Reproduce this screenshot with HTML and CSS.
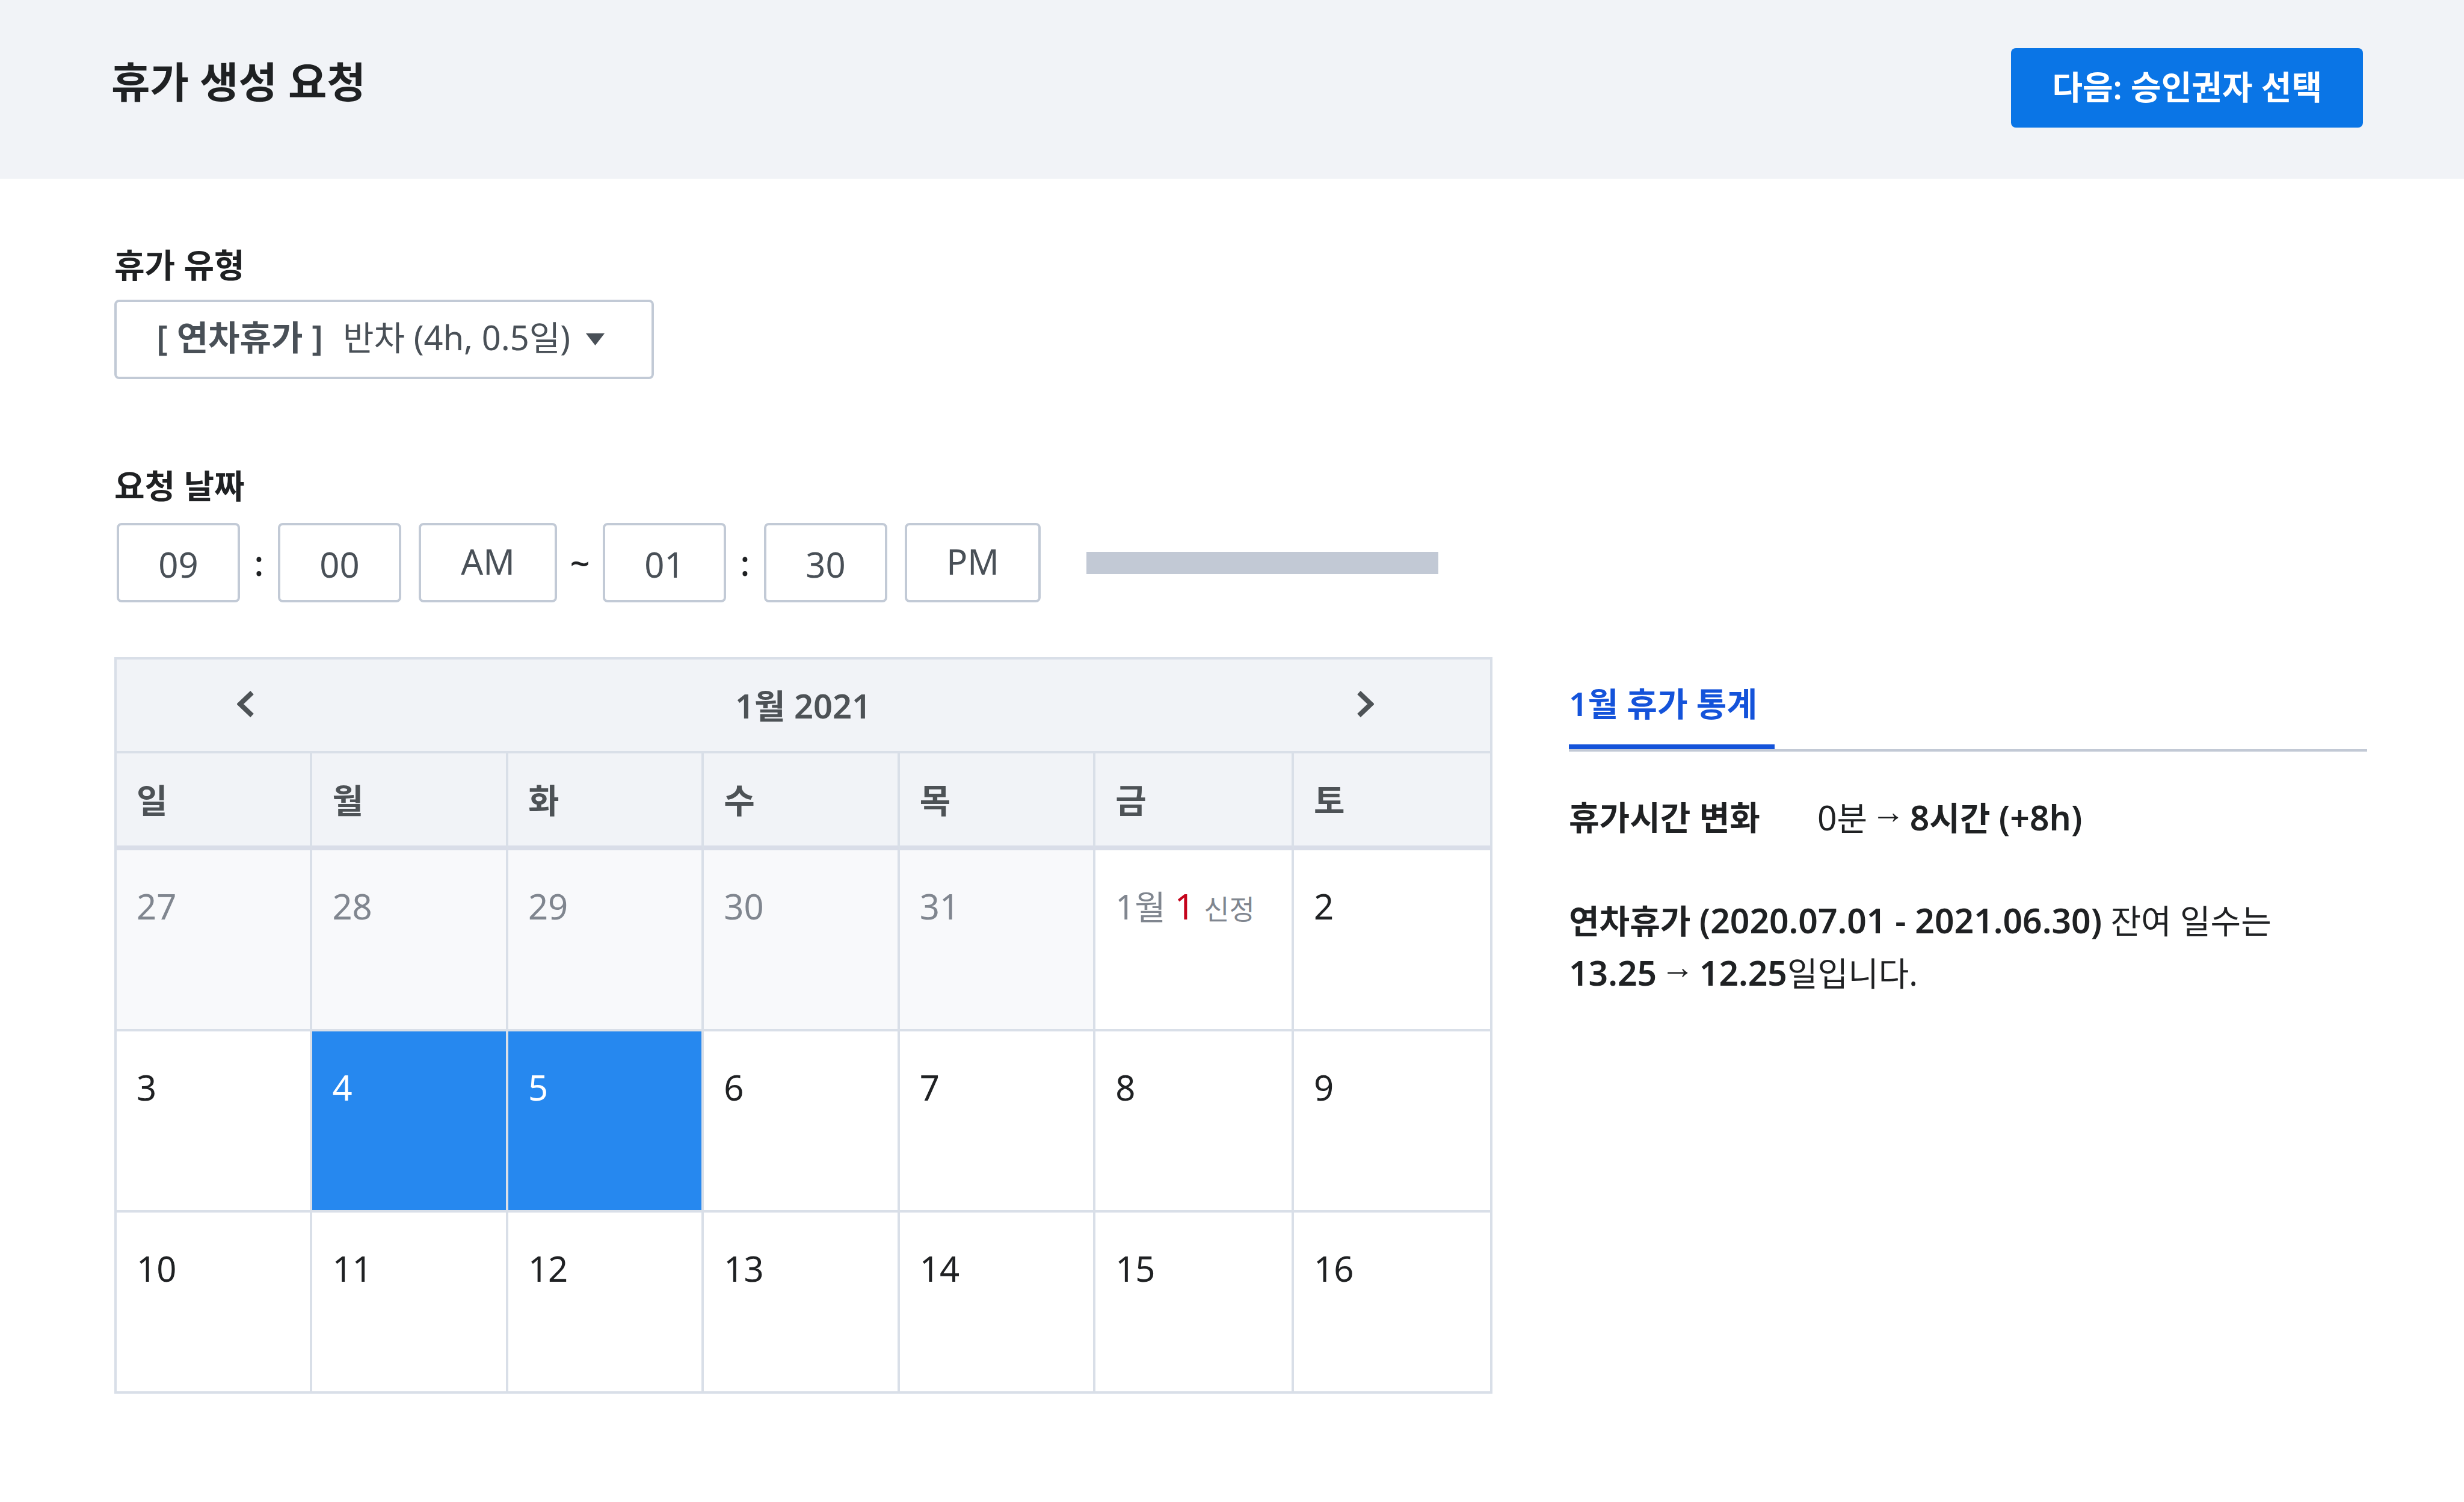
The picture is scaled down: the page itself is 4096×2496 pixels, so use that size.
FILE: index.html
```html
<!DOCTYPE html>
<html lang="ko">
<head>
<meta charset="utf-8">
<title>휴가 생성 요청</title>
<link rel="stylesheet" href="styles.css">
</head>
<body>
<header class="page-header">
  <h1 class="page-title">휴가 생성 요청</h1>
  <button class="next-button" type="button">다음: 승인권자 선택</button>
</header>
<main class="content">
  <form class="request">
    <div class="field">
      <label class="field-label" for="leave-type">휴가 유형</label>
      <div class="leave-type">
        <span class="leave-group">[ 연차휴가 ]</span>
        <select class="leave-select" id="leave-type"><option>반차 (4h, 0.5일)</option></select>
        <svg class="caret" viewBox="0 0 31 20" aria-hidden="true"><path d="M0 0H31L15.500 20Z"/></svg>
      </div>
    </div>
    <fieldset class="field field-date">
      <legend class="field-label">요청 날짜</legend>
      <div class="time-row">
        <input class="time-box" type="text" value="09" aria-label="시작 시">
        <span class="colon">:</span>
        <input class="time-box" type="text" value="00" aria-label="시작 분">
        <select class="time-box meridiem" aria-label="시작 오전/오후"><option>AM</option><option>PM</option></select>
        <span class="tilde">~</span>
        <input class="time-box" type="text" value="01" aria-label="종료 시">
        <span class="colon">:</span>
        <input class="time-box" type="text" value="30" aria-label="종료 분">
        <select class="time-box meridiem meridiem-end" aria-label="종료 오전/오후"><option>PM</option><option>AM</option></select>
        <span class="time-bar"></span>
      </div>
    </fieldset>
    <section class="calendar">
      <div class="calendar-nav">
        <button class="nav-button" type="button" aria-label="이전 달"><svg class="chevron" viewBox="0 0 28 44"><path d="M25 3L5 22L25 41"/></svg></button>
        <h2 class="calendar-title">1월 2021</h2>
        <button class="nav-button" type="button" aria-label="다음 달"><svg class="chevron" viewBox="0 0 28 44"><path d="M3 3L23 22L3 41"/></svg></button>
      </div>
      <table class="month">
        <colgroup><col class="weekday" span="5"><col span="2"></colgroup>
        <thead>
          <tr><th>일</th><th>월</th><th>화</th><th>수</th><th>목</th><th>금</th><th>토</th></tr>
        </thead>
        <tbody>
          <tr><td class="outside">27</td><td class="outside">28</td><td class="outside">29</td><td class="outside">30</td><td class="outside">31</td><td><span class="month-name">1월</span> <span class="holiday">1</span> <span class="holiday-name">신정</span></td><td>2</td></tr>
          <tr><td>3</td><td class="selected">4</td><td class="selected">5</td><td>6</td><td>7</td><td>8</td><td>9</td></tr>
          <tr><td>10</td><td>11</td><td>12</td><td>13</td><td>14</td><td>15</td><td>16</td></tr>
        </tbody>
      </table>
    </section>
  </form>
  <aside class="stats">
    <div class="tabs"><a class="tab" href="#stats">1월 휴가 통계</a></div>
    <dl class="change" id="stats">
      <dt>휴가시간 변화</dt>
      <dd><span class="num">0</span>분 <span class="arrow">→</span> <b><span class="num">8</span>시간 <span class="num">(+8h)</span></b></dd>
    </dl>
    <p class="remaining"><b>연차휴가 <span class="num">(2020.07.01 - 2021.06.30)</span></b> 잔여 일수는<br><b class="num">13.25</b> <span class="arrow">→</span> <b class="num">12.25</b>일입니다.</p>
  </aside>
</main>
</body>
</html>
```
FILE: styles.css
```css
* { box-sizing: border-box; }

body {
  margin: 0;
  background: #fff;
  color: #1f2123;
  font-family: "Noto Sans", "Noto Sans CJK KR", sans-serif;
  font-size: 55px;
  line-height: 80px;
}

button, input, select { font: inherit; color: inherit; margin: 0; }
h1, h2, p, dl, dd { margin: 0; }
b, dt { font-weight: 600; }

.page-header {
  display: flex;
  justify-content: space-between;
  align-items: flex-start;
  padding: 80px 168px 85px 185px;
  background: #f1f3f7;
}
.page-title { font-size: 70px; line-height: 112px; font-weight: 600; }
.next-button {
  height: 132px;
  padding: 0 68px 4px;
  border: 0;
  border-radius: 8px;
  background: #0a75e6;
  color: #fff;
  font-weight: 600;
}

.content {
  display: grid;
  grid-template-columns: 2291fr 1327fr;
  column-gap: 127px;
  padding: 103px 161px 0 190px;
}

.field { margin: 0; padding: 0; border: 0; }
.field-date { margin-top: 137px; }
.field-label { display: block; padding: 0; font-weight: 600; }

.leave-type {
  display: flex;
  align-items: center;
  width: max-content;
  height: 132px;
  margin-top: 18px;
  padding: 0 78px 8px 66px;
  border: 4px solid #c2cad6;
  border-radius: 8px;
  color: #495057;
}
.leave-group { margin-right: 33px; font-size: 57px; font-weight: 600; }
.leave-select { padding: 0; border: 0; background: none; font-size: 56px; appearance: none; }
.caret { width: 31px; height: 20px; margin: 8px 0 0 26px; fill: #495057; }

.time-row {
  display: flex;
  align-items: center;
  margin-top: 22px;
  padding-left: 4px;
  font-size: 58px;
}
.time-box {
  width: 205px;
  height: 132px;
  padding: 4px 0 0;
  border: 4px solid #c2cad6;
  border-radius: 8px;
  background: #fff;
  color: #495057;
  text-align: center;
}
.meridiem {
  width: 230px;
  margin-left: 29px;
  padding: 0 0 4px;
  appearance: none;
  text-align-last: center;
}
.meridiem-end { width: 226px; }
.colon, .tilde { width: 63px; font-weight: 500; text-align: center; }
.tilde { width: 76px; }
.time-bar { width: 585px; height: 37px; margin-left: 76px; background: #c2c9d5; }

.calendar { margin-top: 91px; border-left: 4px solid #d9dfe8; }
.calendar-nav {
  display: flex;
  justify-content: space-between;
  align-items: center;
  height: 160px;
  padding: 0 157px 0 164px;
  border: solid #d9dfe8;
  border-width: 4px 4px 4px 0;
  background: #f1f3f7;
  color: #4d5256;
}
.calendar-title { margin-right: 8px; font-size: 56px; font-weight: 600; }
.nav-button { display: flex; justify-content: center; width: 100px; padding: 0 0 4px; border: 0; background: none; }
.chevron { width: 28px; height: 44px; fill: none; stroke: currentColor; stroke-width: 8px; }

.month { width: 100%; table-layout: fixed; border-collapse: separate; border-spacing: 0; }
.weekday { width: 14.23%; }
.month th, .month td {
  padding: 0 0 0 33px;
  border: solid #d9dfe8;
  border-width: 0 4px 4px 0;
  text-align: left;
}
.month th {
  height: 161px;
  border-bottom: 8px solid #d9dde8;
  background: #f1f3f7;
  color: #4d5256;
  font-size: 56px;
  font-weight: 600;
}
.month td { height: 301px; padding-top: 53px; font-size: 58px; vertical-align: top; }
.month .outside { background: #f8f9fb; color: #80868f; }
.month .selected { background: #2688ef; color: #fff; }
.month-name, .holiday-name { color: #80868f; }
.month-name { font-size: 56px; }
.holiday { color: #c5041c; }
.holiday-name { font-size: 46px; }

.stats { margin-top: 729px; }
.tabs { display: flex; border-bottom: 4px solid #c2c9d5; }
.tab {
  width: 342px;
  padding-bottom: 28px;
  border-bottom: 8px solid #1453da;
  color: #1453da;
  font-weight: 600;
  text-decoration: none;
}
.change { display: flex; margin-top: 69px; }
.change dd { margin-left: 95px; }
.num { font-size: 57px; }
.arrow { margin: 0 -6px 0 -8px; font-family: "Liberation Sans", sans-serif; font-size: 56px; font-weight: 700; line-height: 1; vertical-align: 12px; }
.remaining { margin-top: 87px; line-height: 86px; }
```
